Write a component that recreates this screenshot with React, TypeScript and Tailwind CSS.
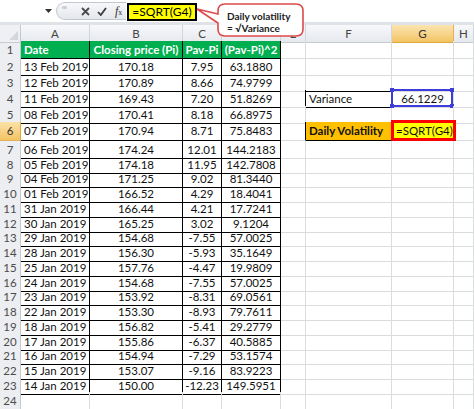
import React from 'react';
import clsx from 'clsx';

type Row = [string, string, string, string];

// rows 2..23 of the sheet
const data: Row[] = [
  ['13 Feb 2019', '170.18', '7.95', '63.1880'],
  ['12 Feb 2019', '170.89', '8.66', '74.9799'],
  ['11 Feb 2019', '169.43', '7.20', '51.8269'],
  ['08 Feb 2019', '170.41', '8.18', '66.8975'],
  ['07 Feb 2019', '170.94', '8.71', '75.8483'],
  ['06 Feb 2019', '174.24', '12.01', '144.2183'],
  ['05 Feb 2019', '174.18', '11.95', '142.7808'],
  ['04 Feb 2019', '171.25', '9.02', '81.3440'],
  ['01 Feb 2019', '166.52', '4.29', '18.4041'],
  ['31 Jan 2019', '166.44', '4.21', '17.7241'],
  ['30 Jan 2019', '165.25', '3.02', '9.1204'],
  ['29 Jan 2019', '154.68', '-7.55', '57.0025'],
  ['28 Jan 2019', '156.30', '-5.93', '35.1649'],
  ['25 Jan 2019', '157.76', '-4.47', '19.9809'],
  ['24 Jan 2019', '154.68', '-7.55', '57.0025'],
  ['23 Jan 2019', '153.92', '-8.31', '69.0561'],
  ['22 Jan 2019', '153.30', '-8.93', '79.7611'],
  ['18 Jan 2019', '156.82', '-5.41', '29.2779'],
  ['17 Jan 2019', '155.86', '-6.37', '40.5885'],
  ['16 Jan 2019', '154.94', '-7.29', '53.1574'],
  ['15 Jan 2019', '153.07', '-9.16', '83.9223'],
  ['14 Jan 2019', '150.00', '-12.23', '149.5951'],
];

const rowH = [
  'h-[17px]', 'h-[16px]', 'h-[16px]', 'h-[16px]', 'h-[16px]', 'h-[19px]',
  'h-[15px]', 'h-[14px]', 'h-[15px]', 'h-[15px]', 'h-[15px]', 'h-[14px]',
  'h-[15px]', 'h-[15px]', 'h-[15px]', 'h-[14px]', 'h-[15px]', 'h-[15px]',
  'h-[15px]', 'h-[14px]', 'h-[15px]', 'h-[15px]', 'h-[15px]', 'h-[17px]',
];

const COLS = 'grid grid-cols-[21px_69px_93px_39px_59px_25px_86px_62px_1fr]';
// D sits under the callout, so its letter is hidden in the shot
const letters = ['A', 'B', 'C', '', 'E', 'F', 'G', 'H'];

// right / bottom border colour of a cell (r = sheet row, c = 1 for A)
const borders = (r: number, c: number) => {
  const black = r >= 1 && r <= 23 && c >= 1 && c <= 4;
  let right = black;
  let bottom = black;
  if (c === 6 && (r === 3 || r === 5)) bottom = true;
  if (c === 5 && (r === 4 || r === 6)) right = true;
  if (c === 6 && (r === 4 || r === 6)) { right = true; bottom = true; }
  return clsx(
    'border-r border-b',
    right ? 'border-r-black' : 'border-r-[#dadcdd]',
    bottom ? 'border-b-black' : 'border-b-[#dadcdd]'
  );
};

const FormulaBar: React.FC = () => (
  <div className="h-[22px] flex items-center bg-white relative">
    <div className="w-[56px] h-full flex items-center justify-end pr-[4px]">
      <svg width="7" height="4" viewBox="0 0 7 4"><path d="M0 0 H7 L3.5 4 Z" fill="#333" /></svg>
    </div>
    <div className="h-[18px] w-[70px] rounded-l-full border border-r-0 border-[#c3c8cf] bg-gradient-to-b from-[#f7f8fa] to-[#e4e7ec] flex items-center">
      <div className="ml-[5px] mb-[7px] w-[5px] h-[3px] rounded-full bg-[#c9ced5]" />
      <svg className="ml-[14px]" width="9" height="9" viewBox="0 0 9 9">
        <path d="M1 1 L8 8 M8 1 L1 8" stroke="#4a4a4a" strokeWidth="1.8" />
      </svg>
      <svg className="ml-[7px]" width="10" height="9" viewBox="0 0 10 9">
        <path d="M1 5 L3.8 8 L9 1" stroke="#3a3a3a" strokeWidth="1.8" fill="none" />
      </svg>
      <span className="ml-[8px] font-['Liberation_Serif',serif] italic text-[12px] text-[#333] leading-none">
        f<span className="text-[8px] not-italic">x</span>
      </span>
    </div>
    <div className="ml-[1px] h-[18px] w-[70px] mt-[2px] border-2 border-black bg-[#ffff00] flex items-center justify-center text-[12px] text-black">
      =SQRT(G4)
    </div>
  </div>
);

const Callout: React.FC = () => (
  <div className="absolute left-[195px] top-[2px] w-[112px] h-[36px]">
    <svg width="112" height="36" viewBox="0 0 112 36" className="absolute left-0 top-0">
      <path
        d="M30 2 H101 Q108 2 108 9 V27 Q108 34 101 34 H30 Q23 34 23 27 V21 L2 7 L23 12 V9 Q23 2 30 2 Z"
        fill="#fff"
        stroke="#dc4a4a"
        strokeWidth="1.6"
      />
    </svg>
    <div className="absolute left-[32px] top-[8px] text-[10px] font-bold leading-[12px] text-[#222] whitespace-nowrap">
      <div>Daily volatility</div>
      <div>= √Variance</div>
    </div>
  </div>
);

const App: React.FC = () => {
  return (
    <div className="w-[474px] h-[409px] overflow-hidden bg-white relative font-['Lato','Liberation_Sans',sans-serif] text-[11.5px] text-[#111]">
      <FormulaBar />
      <div className="h-[3px] bg-[#dfe3e8]" />

      {/* column letters */}
      <div className={clsx(COLS, 'h-[16px]')}>
        <div className="relative bg-[#eef0f3] border-r border-b border-[#c5cad1]">
          <svg className="absolute right-[2px] bottom-[2px]" width="9" height="9" viewBox="0 0 9 9">
            <path d="M9 0 V9 H0 Z" fill="#d3d7dd" />
          </svg>
        </div>
        {letters.map((l, i) => (
          <div
            key={i}
            className={clsx(
              'flex items-center justify-center border-r border-b text-[11.5px]',
              l === 'G'
                ? 'bg-gradient-to-b from-[#fbe5b0] to-[#f3c463] border-r-[#e2b157] border-b-[#e0a83c] text-[#333]'
                : 'bg-gradient-to-b from-[#f7f8fa] to-[#e6e9ee] border-r-[#d2d6dc] border-b-[#c5cad1] text-[#444]'
            )}
          >
            {l}
          </div>
        ))}
      </div>

      {rowH.map((h, idx) => {
        const r = idx + 1;
        const d = r >= 2 && r <= 23 ? data[r - 2] : null;
        return (
          <div key={r} className={clsx(COLS, h)}>
            <div
              className={clsx(
                'flex items-center justify-center border-r border-b',
                r === 6
                  ? 'bg-gradient-to-b from-[#fbe2a8] to-[#f3c363] border-r-[#e0a83c] border-b-[#e2b157] text-[#333]'
                  : 'bg-[#eceef1] border-r-[#c5cad1] border-b-[#dcdfe4] text-[#4b4b4b]'
              )}
            >
              {r}
            </div>

            {/* A */}
            <div
              className={clsx(
                'flex items-center pl-[3px] whitespace-nowrap overflow-hidden',
                borders(r, 1),
                r === 1 && 'bg-[#00b050] text-white font-bold'
              )}
            >
              {r === 1 ? 'Date' : d?.[0]}
            </div>
            {/* B, C, D */}
            {[1, 2, 3].map((k) => (
              <div
                key={k}
                className={clsx(
                  'flex items-center justify-center whitespace-nowrap',
                  borders(r, k + 1),
                  r === 1 && 'bg-[#00b050] text-white font-bold'
                )}
              >
                {r === 1 ? ['Closing price (Pi)', 'Pav-Pi', '(Pav-Pi)^2'][k - 1] : d?.[k]}
              </div>
            ))}
            {/* E */}
            <div className={borders(r, 5)} />
            {/* F */}
            <div
              className={clsx(
                'flex items-center pl-[3px] whitespace-nowrap',
                borders(r, 6),
                r === 6 && 'bg-[#ffc000] font-bold'
              )}
            >
              {r === 4 && 'Variance'}
              {r === 6 && 'Daily Volatility'}
            </div>
            {/* G */}
            <div className={clsx('relative flex items-center justify-center', borders(r, 7))}>
              {r === 4 && (
                <>
                  66.1229
                  <div className="absolute -left-px -top-px right-0 bottom-0 border-2 border-[#3d3ddb]">
                    <div className="absolute -left-[3px] -top-[3px] w-[4px] h-[4px] bg-[#3d3ddb]" />
                    <div className="absolute -right-[3px] -top-[3px] w-[4px] h-[4px] bg-[#3d3ddb]" />
                    <div className="absolute -left-[3px] -bottom-[3px] w-[4px] h-[4px] bg-[#3d3ddb]" />
                    <div className="absolute -right-[3px] -bottom-[3px] w-[4px] h-[4px] bg-[#3d3ddb]" />
                  </div>
                </>
              )}
              {r === 6 && (
                <div className="absolute -left-px -top-[2px] -right-[3px] -bottom-px border-[3px] border-[#ff0000] bg-[#ffff00] flex items-center pl-[2px] whitespace-nowrap">
                  =SQRT(G4)
                  <div className="ml-[1px] w-[2px] h-[12px] bg-black" />
                </div>
              )}
            </div>
            {/* H */}
            <div className={borders(r, 8)} />
          </div>
        );
      })}

      <Callout />
    </div>
  );
};

export default App;
